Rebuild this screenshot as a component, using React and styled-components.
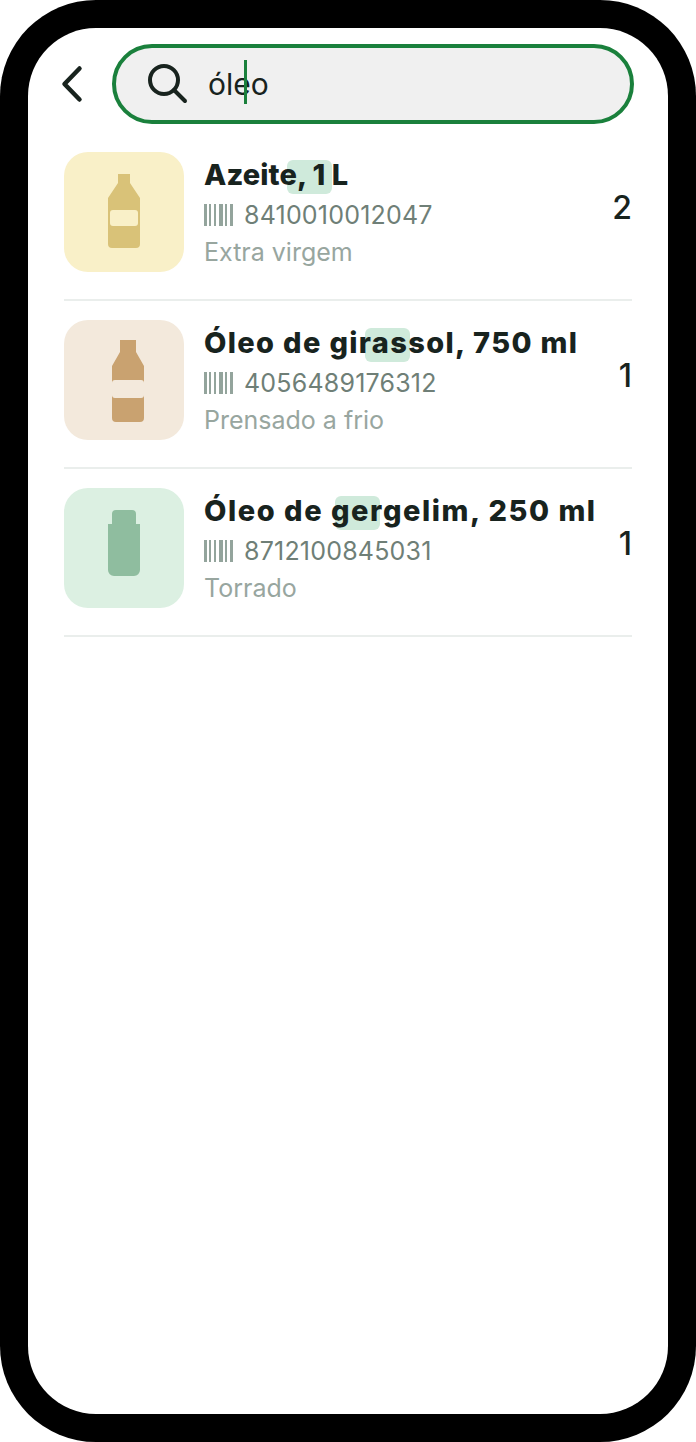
import styled, { createGlobalStyle } from 'styled-components'

const GlobalStyle = createGlobalStyle`
  html, body {
    margin: 0;
    padding: 0;
    background: #fff;
  }
  body {
    font-family: "Inter", "Liberation Sans", sans-serif;
  }
`

const Phone = styled.div`
  box-sizing: border-box;
  width: 696px;
  height: 1442px;
  padding: 28px;
  background: #000;
  border-radius: 96px;
`

const Screen = styled.div`
  box-sizing: border-box;
  height: 100%;
  padding: 16px 36px 0;
  background: #fff;
  border-radius: 68px;
`

const Header = styled.header`
  display: flex;
  align-items: center;
  gap: 26px;
  margin-bottom: 28px;
`

const BackButton = styled.button`
  display: flex;
  flex: none;
  width: 26px;
  height: 40px;
  margin-left: -4px;
  padding: 0;
  border: 0;
  background: none;
`

const SearchBox = styled.div`
  box-sizing: border-box;
  display: flex;
  flex: 1;
  align-items: center;
  gap: 20px;
  height: 80px;
  margin-right: -2px;
  padding-left: 32px;
  background: #f0f0f0;
  border: 4px solid #1a803c;
  border-radius: 40px;
`

const Query = styled.div`
  position: relative;
  color: #18231e;
  font-size: 30px;
  line-height: 40px;
`

const Caret = styled.span`
  position: absolute;
  top: -4px;
  left: 36px;
  width: 3px;
  height: 44px;
  background: #1a803c;
`

const Row = styled.article`
  display: flex;
  gap: 20px;
  padding-bottom: 27px;
  margin-bottom: 19px;
  border-bottom: 2px solid #eaeeec;
`

const Thumb = styled.div`
  flex: none;
  width: 120px;
  height: 120px;
  background: ${p => p.$bg};
  border-radius: 24px;
`

const Info = styled.div`
  flex: 1;
  min-width: 0;
  padding-top: 4px;
`

const Title = styled.h2`
  position: relative;
  margin: 0;
  color: #18231e;
  font-size: 29px;
  font-weight: 800;
  letter-spacing: ${p => p.$tracking}px;
  line-height: 38px;
  white-space: nowrap;
  span {
    position: relative;
  }
`

const Highlight = styled.i`
  position: absolute;
  top: 4px;
  left: ${p => p.$left}px;
  width: 45px;
  height: 34px;
  background: #cfeadb;
  border-radius: 6px;
`

const Code = styled.div`
  display: flex;
  align-items: center;
  gap: 11px;
  margin-top: 2px;
  color: #6f7f77;
  font-size: 25px;
  letter-spacing: 0.2px;
  line-height: 38px;
`

const Note = styled.div`
  margin-top: 1px;
  color: #98a69f;
  font-size: 25px;
  line-height: 34px;
`

const Count = styled.div`
  flex: none;
  align-self: flex-start;
  margin-top: 36px;
  color: #18231e;
  font-size: 32px;
  font-weight: 500;
  line-height: 40px;
`

const Barcode = () => (
  <svg width="29" height="22" viewBox="0 0 29 22" fill="#93a49c">
    <rect x="0" width="3" height="22" />
    <rect x="5" width="2" height="22" />
    <rect x="10" width="2" height="22" />
    <rect x="15" width="4" height="22" />
    <rect x="21" width="2" height="22" />
    <rect x="26" width="3" height="22" />
  </svg>
)

const products = [
  {
    name: 'Azeite, 1 L',
    code: '8410010012047',
    note: 'Extra virgem',
    count: 2,
    bg: '#f9f0c8',
    hl: 83,
    tracking: 0.1,
    bottle: (
      <svg width="120" height="120" viewBox="0 0 120 120">
        <path d="M54 22h12v9l10 15v46a4 4 0 0 1-4 4H48a4 4 0 0 1-4-4V46l10-15z" fill="#d9c278" />
        <rect x="46" y="58" width="28" height="16" rx="3" fill="#f9f0c8" />
      </svg>
    ),
  },
  {
    name: 'Óleo de girassol, 750 ml',
    code: '4056489176312',
    note: 'Prensado a frio',
    count: 1,
    bg: '#f3e9dc',
    hl: 161,
    tracking: 1.35,
    bottle: (
      <svg width="120" height="120" viewBox="0 0 120 120">
        <path d="M56 20h16v12l8 14v52a4 4 0 0 1-4 4H52a4 4 0 0 1-4-4V46l8-14z" fill="#c9a270" />
        <rect x="48" y="60" width="32" height="18" rx="3" fill="#f3e9dc" />
      </svg>
    ),
  },
  {
    name: 'Óleo de gergelim, 250 ml',
    code: '8712100845031',
    note: 'Torrado',
    count: 1,
    bg: '#dcf0e2',
    hl: 131,
    tracking: 1.55,
    bottle: (
      <svg width="120" height="120" viewBox="0 0 120 120">
        <path d="M48 26a4 4 0 0 1 4-4h16a4 4 0 0 1 4 4v10h4v46a6 6 0 0 1-6 6H50a6 6 0 0 1-6-6V36h4z" fill="#8fbd9f" />
      </svg>
    ),
  },
]

export default function App() {
  return (
    <Phone>
      <GlobalStyle />
      <Screen>
        <Header>
          <BackButton aria-label="Voltar">
            <svg width="26" height="40" viewBox="0 0 26 40" fill="none" stroke="#18231e" strokeWidth="4.5" strokeLinecap="round" strokeLinejoin="round">
              <path d="M19.5 4.5 4.5 20l15 15.5" />
            </svg>
          </BackButton>
          <SearchBox>
            <svg width="40" height="40" viewBox="0 0 40 40" fill="none" stroke="#18231e" strokeWidth="4" strokeLinecap="round">
              <circle cx="16" cy="16" r="14" />
              <path d="m26 26 11 11" />
            </svg>
            <Query>
              óleo
              <Caret />
            </Query>
          </SearchBox>
        </Header>
        {products.map(p => (
          <Row key={p.code}>
            <Thumb $bg={p.bg}>{p.bottle}</Thumb>
            <Info>
              <Title $tracking={p.tracking}>
                <Highlight $left={p.hl} />
                <span>{p.name}</span>
              </Title>
              <Code>
                <Barcode />
                {p.code}
              </Code>
              <Note>{p.note}</Note>
            </Info>
            <Count>{p.count}</Count>
          </Row>
        ))}
      </Screen>
    </Phone>
  )
}
